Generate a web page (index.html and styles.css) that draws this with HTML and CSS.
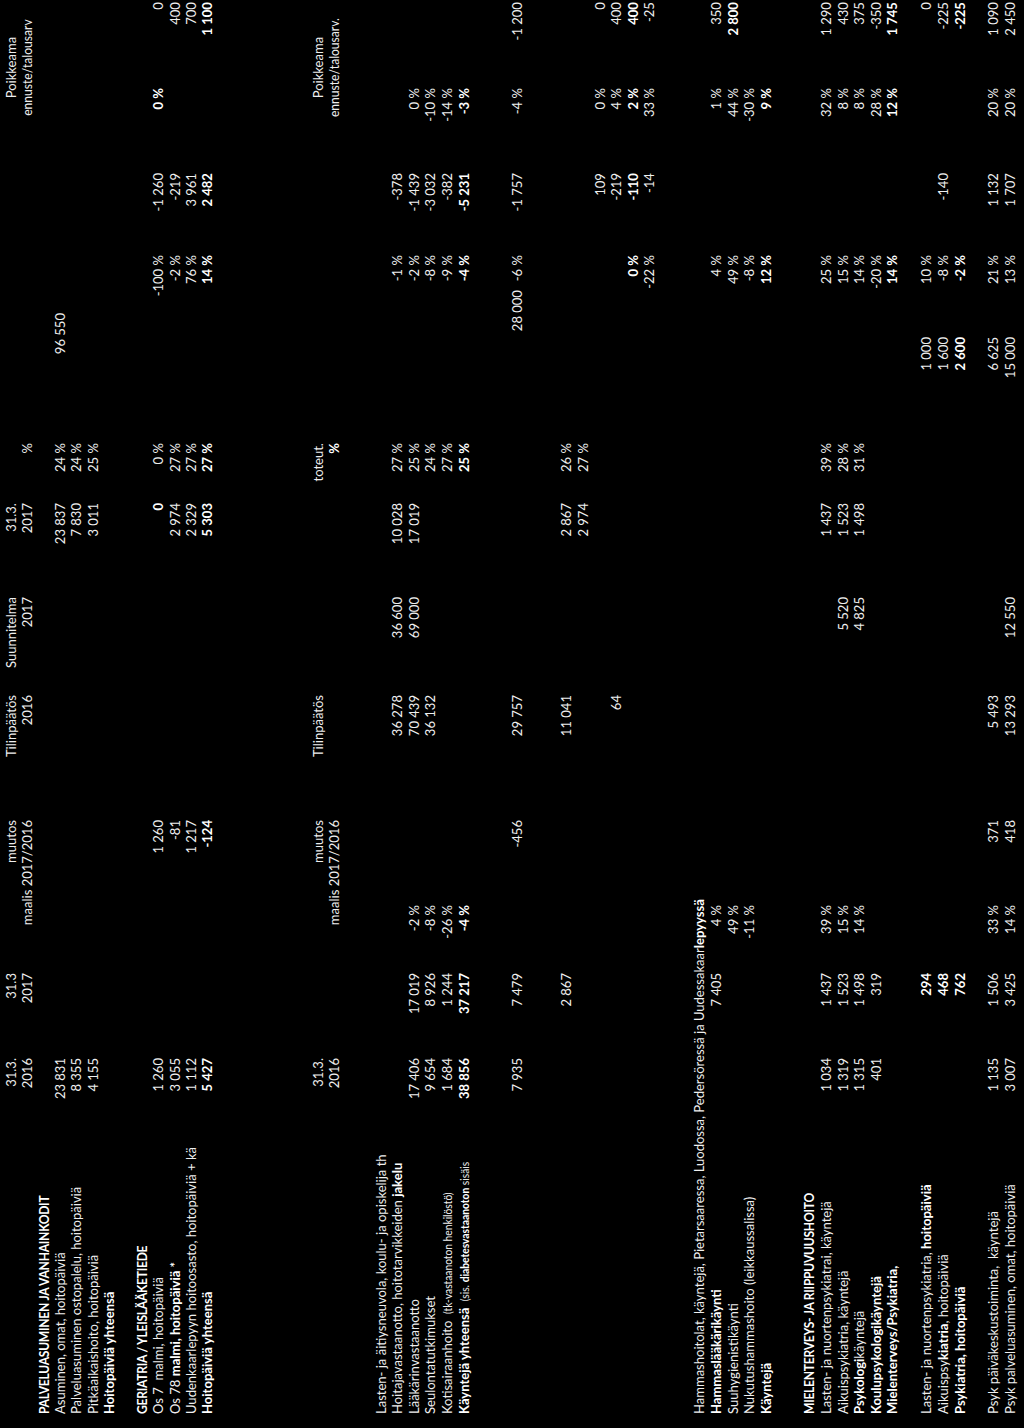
FILE: index.html
```html
<!DOCTYPE html>
<html lang="fi">
<head>
<meta charset="utf-8">
<title>Suoritteet 31.3.2017</title>
<link rel="stylesheet" href="styles.css">
</head>
<body>
<div class="sheet">

  <section class="blk b1 s1">
    <div class="row hd"><span class="c1">31.3.</span><span class="c2">31.3</span><span class="c3">muutos</span><span class="c4">Tilinpäätös</span><span class="c5">Suunnitelma</span><span class="c6">31.3.</span><span class="pk">Poikkeama</span></div>
    <div class="row hd"><span class="c1">2016</span><span class="c2">2017</span><span class="c3">maalis 2017/2016</span><span class="c4">2016</span><span class="c5">2017</span><span class="c6">2017</span><span class="c7">%</span><span class="pk pks">ennuste/talousarv</span></div>
    <div class="row"><span class="lb tt">PALVELUASUMINEN JA VANHAINKODIT</span></div>
    <div class="row"><span class="lb">Asuminen, omat, hoitopäiviä</span><span class="c1">23 831</span><span class="c6">23 837</span><span class="c7">24 %</span><span class="c8">96 550</span></div>
    <div class="row"><span class="lb">Palveluasuminen ostopalelu, hoitopäiviä</span><span class="c1">8 355</span><span class="c6">7 830</span><span class="c7">24 %</span></div>
    <div class="row"><span class="lb">Pitkäaikaishoito, hoitopäiviä</span><span class="c1">4 155</span><span class="c6">3 011</span><span class="c7">25 %</span></div>
    <div class="row"><span class="lb"><b>Hoitopäiviä yhteensä</b></span></div>
    <div class="row"></div>
    <div class="row"><span class="lb tt">GERIATRIA / YLEISLÄÄKETIEDE</span></div>
    <div class="row"><span class="lb">Os 7&nbsp; malmi, hoitopäiviä</span><span class="c1">1 260</span><span class="c3b">1 260</span><span class="c6"><b>0</b></span><span class="c7">0 %</span><span class="c9">-100 %</span><span class="c10">-1 260</span><span class="c11"><b>0 %</b></span><span class="c12">0</span></div>
    <div class="row"><span class="lb">Os 78 <b>malmi, hoitopäiviä *</b></span><span class="c1">3 055</span><span class="c3b">-81</span><span class="c6">2 974</span><span class="c7">27 %</span><span class="c9">-2 %</span><span class="c10">-219</span><span class="c12">400</span></div>
    <div class="row"><span class="lb">Uudenkaarlepyyn hoitoosasto, hoitopäiviä + kä</span><span class="c1">1 112</span><span class="c3b">1 217</span><span class="c6">2 329</span><span class="c7">27 %</span><span class="c9">76 %</span><span class="c10">3 961</span><span class="c12">700</span></div>
    <div class="row bold"><span class="lb">Hoitopäiviä yhteensä</span><span class="c1">5 427</span><span class="c3b">-124</span><span class="c6">5 303</span><span class="c7">27 %</span><span class="c9">14 %</span><span class="c10">2 482</span><span class="c12">1 100</span></div>
  </section>

  <section class="blk b2">
    <div class="row hd"><span class="c1">31.3.</span><span class="c3">muutos</span><span class="c4">Tilinpäätös</span><span class="c7">toteut.</span><span class="pk">Poikkeama</span></div>
    <div class="row hd"><span class="c1">2016</span><span class="c3">maalis 2017/2016</span><span class="c7"><b>%</b></span><span class="pk pks">ennuste/talousarv.</span></div>
  </section>

  <section class="blk b3">
    <div class="row"><span class="lb">Lasten- ja äitiysneuvola, koulu- ja opiskelija th</span></div>
    <div class="row"><span class="lb">Hoitajavastaanotto, hoitotarvikkeiden <b>jakelu</b></span><span class="c4">36 278</span><span class="c5">36 600</span><span class="c6">10 028</span><span class="c7">27 %</span><span class="c9">-1 %</span><span class="c10">-378</span></div>
    <div class="row"><span class="lb">Lääkärinvastaanotto</span><span class="c1">17 406</span><span class="c2">17 019</span><span class="c3a">-2 %</span><span class="c4">70 439</span><span class="c5">69 000</span><span class="c6">17 019</span><span class="c7">25 %</span><span class="c9">-2 %</span><span class="c10">-1 439</span><span class="c11">0 %</span></div>
    <div class="row"><span class="lb">Seulontatutkimukset</span><span class="c1">9 654</span><span class="c2">8 926</span><span class="c3a">-8 %</span><span class="c4">36 132</span><span class="c7">24 %</span><span class="c9">-8 %</span><span class="c10">-3 032</span><span class="c11">-10 %</span></div>
    <div class="row"><span class="lb">Kotisairaanhoito&nbsp; <small>(tk-vastaanoton henkilöstö)</small></span><span class="c1">1 684</span><span class="c2">1 244</span><span class="c3a">-26 %</span><span class="c7">27 %</span><span class="c9">-9 %</span><span class="c10">-382</span><span class="c11">-14 %</span></div>
    <div class="row bold"><span class="lb">Käyntejä yhteensä&nbsp; <small class="reg">(sis. <b>diabetesvastaanoton</b> sisäis</small></span><span class="c1">38 856</span><span class="c2">37 217</span><span class="c3a">-4 %</span><span class="c7">25 %</span><span class="c9">-4 %</span><span class="c10">-5 231</span><span class="c11">-3 %</span></div>
  </section>

  <section class="blk b4">
    <div class="row"><span class="c1">7 935</span><span class="c2">7 479</span><span class="c3b">-456</span><span class="c4">29 757</span><span class="c8 out">28 000</span><span class="c9">-6 %</span><span class="c10">-1 757</span><span class="c11">-4 %</span><span class="c12">-1 200</span></div>
  </section>

  <section class="blk b5">
    <div class="row"><span class="c2">2 867</span><span class="c4">11 041</span><span class="c6">2 867</span><span class="c7">26 %</span></div>
    <div class="row"><span class="c6">2 974</span><span class="c7">27 %</span></div>
    <div class="row"><span class="c10">109</span><span class="c11">0 %</span><span class="c12">0</span></div>
    <div class="row"><span class="c4">64</span><span class="c10">-219</span><span class="c11">4 %</span><span class="c12">400</span></div>
    <div class="row bold"><span class="c9">0 %</span><span class="c10">-110</span><span class="c11">2 %</span><span class="c12">400</span></div>
    <div class="row"><span class="c9">-22 %</span><span class="c10">-14</span><span class="c11">33 %</span><span class="c12">-25</span></div>
  </section>

  <section class="blk b6">
    <div class="row"><span class="lb wide">Hammashoitolat, käyntejä, Pietarsaaressa, Luodossa, Pedersöressä ja Uudessakaar<b>lepyyssä</b></span></div>
    <div class="row"><span class="lb"><b>Hammaslääkärikäynti</b></span><span class="c2">7 405</span><span class="c3a">4 %</span><span class="c9">4 %</span><span class="c11">1 %</span><span class="c12">350</span></div>
    <div class="row"><span class="lb">Suuhygienistikäynti</span><span class="c3a">49 %</span><span class="c9">49 %</span><span class="c11">44 %</span><span class="c12"><b>2 800</b></span></div>
    <div class="row"><span class="lb">Nukutushammashoito (leikkaussalissa)</span><span class="c3a">-11 %</span><span class="c9">-8 %</span><span class="c11">-30 %</span></div>
    <div class="row bold"><span class="lb">Käyntejä</span><span class="c9">12 %</span><span class="c11">9 %</span></div>
  </section>

  <section class="blk b7">
    <div class="row"><span class="lb tt">MIELENTERVEYS- JA RIIPPUVUUSHOITO</span></div>
    <div class="row"><span class="lb">Lasten- ja nuortenpsykiatrai, käyntejä</span><span class="c1">1 034</span><span class="c2">1 437</span><span class="c3a">39 %</span><span class="c6">1 437</span><span class="c7">39 %</span><span class="c9">25 %</span><span class="c11">32 %</span><span class="c12">1 290</span></div>
    <div class="row"><span class="lb">Aikuispsykiatria, käyntejä</span><span class="c1">1 319</span><span class="c2">1 523</span><span class="c3a">15 %</span><span class="c5">5 520</span><span class="c6">1 523</span><span class="c7">28 %</span><span class="c9">15 %</span><span class="c11">8 %</span><span class="c12">430</span></div>
    <div class="row"><span class="lb"><b>Psykologi</b>käyntejä</span><span class="c1">1 315</span><span class="c2">1 498</span><span class="c3a">14 %</span><span class="c5">4 825</span><span class="c6">1 498</span><span class="c7">31 %</span><span class="c9">14 %</span><span class="c11">8 %</span><span class="c12">375</span></div>
    <div class="row"><span class="lb"><b>Koulupsykologikäyntejä</b></span><span class="c1">401</span><span class="c2">319</span><span class="c9">-20 %</span><span class="c11">28 %</span><span class="c12">-350</span></div>
    <div class="row bold"><span class="lb">Mielenterveys/Psykiatria,</span><span class="c9">14 %</span><span class="c11">12 %</span><span class="c12">1 745</span></div>
  </section>

  <section class="blk b8">
    <div class="row"><span class="lb">Lasten- ja nuortenpsykiatria, <b>hoitopäiviä</b></span><span class="c2"><b>294</b></span><span class="c8 in">1 000</span><span class="c9">10 %</span><span class="c12">0</span></div>
    <div class="row"><span class="lb">Aikuispsy<b>kiatria</b>, hoitopäiviä</span><span class="c2"><b>468</b></span><span class="c8 in">1 600</span><span class="c9">-8 %</span><span class="c10">-140</span><span class="c12">-225</span></div>
    <div class="row bold"><span class="lb">Psykiatria, hoitopäiviä</span><span class="c2">762</span><span class="c8 in">2 600</span><span class="c9">-2 %</span><span class="c12">-225</span></div>
  </section>

  <section class="blk b9">
    <div class="row"><span class="lb">Psyk päiväkeskustoiminta,&nbsp; käyntejä</span><span class="c1">1 135</span><span class="c2">1 506</span><span class="c3a">33 %</span><span class="c3b">371</span><span class="c4">5 493</span><span class="c8 in">6 625</span><span class="c9">21 %</span><span class="c10">1 132</span><span class="c11">20 %</span><span class="c12">1 090</span></div>
    <div class="row"><span class="lb">Psyk palveluasuminen, omat, hoitopäiviä</span><span class="c1">3 007</span><span class="c2">3 425</span><span class="c3a">14 %</span><span class="c3b">418</span><span class="c4">13 293</span><span class="c5">12 550</span><span class="c8 in">15 000</span><span class="c9">13 %</span><span class="c10">1 707</span><span class="c11">20 %</span><span class="c12">2 450</span></div>
  </section>

</div>
</body>
</html>
```

FILE: styles.css
```css
html, body {
  margin: 0;
  padding: 0;
  background: #000;
  overflow: hidden;
}

body {
  width: 1024px;
  height: 1428px;
}

.sheet {
  --s: 0.93;
  width: calc(1428px / var(--s));
  height: 1024px;
  box-sizing: border-box;
  padding-left: calc(14px / var(--s));
  overflow: hidden;
  transform-origin: 0 0;
  transform: translateY(1428px) rotate(-90deg) scaleX(var(--s));
  font-family: "Lato", "Open Sans", "Liberation Sans", sans-serif;
  font-size: 14px;
  color: #efefef;
}

.row {
  display: grid;
  grid-template-columns:
    calc(264px / var(--s))
    calc(92px / var(--s))
    calc(85px / var(--s))
    calc(68px / var(--s))
    calc(85px / var(--s))
    calc(125px / var(--s))
    calc(98px / var(--s))
    calc(94px / var(--s))
    calc(60px / var(--s))
    calc(130px / var(--s))
    calc(58px / var(--s))
    calc(82px / var(--s))
    calc(85px / var(--s))
    calc(86px / var(--s));
  height: 16.6px;
  line-height: 16.6px;
  white-space: nowrap;
}

.s1 .row {
  height: 16.4px;
  line-height: 16.4px;
}

.row > span {
  grid-row: 1;
  text-align: right;
}

.row b, .bold {
  font-weight: 700;
  color: #fff;
}

.lb {
  grid-column: 1;
  text-align: left !important;
}

.lb.wide {
  grid-column: 1 / 5;
}

.lb.tt {
  font-weight: 700;
  color: #fff;
  font-size: 13px;
  letter-spacing: -0.3px;
}

.lb small {
  font-size: 11px;
}

.bold .reg {
  font-weight: 400;
  color: #e4e4e4;
}

.c1 { grid-column: 2; }
.c2 { grid-column: 3; }
.c3a { grid-column: 4; }
.c3b { grid-column: 5; }
.c3 { grid-column: 4 / 6; }
.c4 { grid-column: 6; }
.c5 { grid-column: 7; }
.c6 { grid-column: 8; }
.c7 { grid-column: 9; }
.c8 { grid-column: 10; }
.c9 { grid-column: 11; }
.c10 { grid-column: 12; }
.c11 { grid-column: 13; }
.c12 { grid-column: 14; }

.c8.out {
  margin-right: calc(-23px / var(--s));
}

.c8.in {
  padding-right: calc(24px / var(--s));
}

.pk {
  grid-column: 13 / 15;
  text-align: center !important;
  padding-left: calc(40px / var(--s));
}

.pks {
  font-size: 13px;
}

.b1 { margin-top: 2.8px; }
.b2 { margin-top: 93.7px; }
.b3 { margin-top: 29.8px; }
.b4 { margin-top: 36.4px; }
.b5 { margin-top: 33.4px; }
.b6 { margin-top: 33.4px; }
.b7 { margin-top: 27px; }
.b8 { margin-top: 17.4px; }
.b9 { margin-top: 17.2px; }
```
